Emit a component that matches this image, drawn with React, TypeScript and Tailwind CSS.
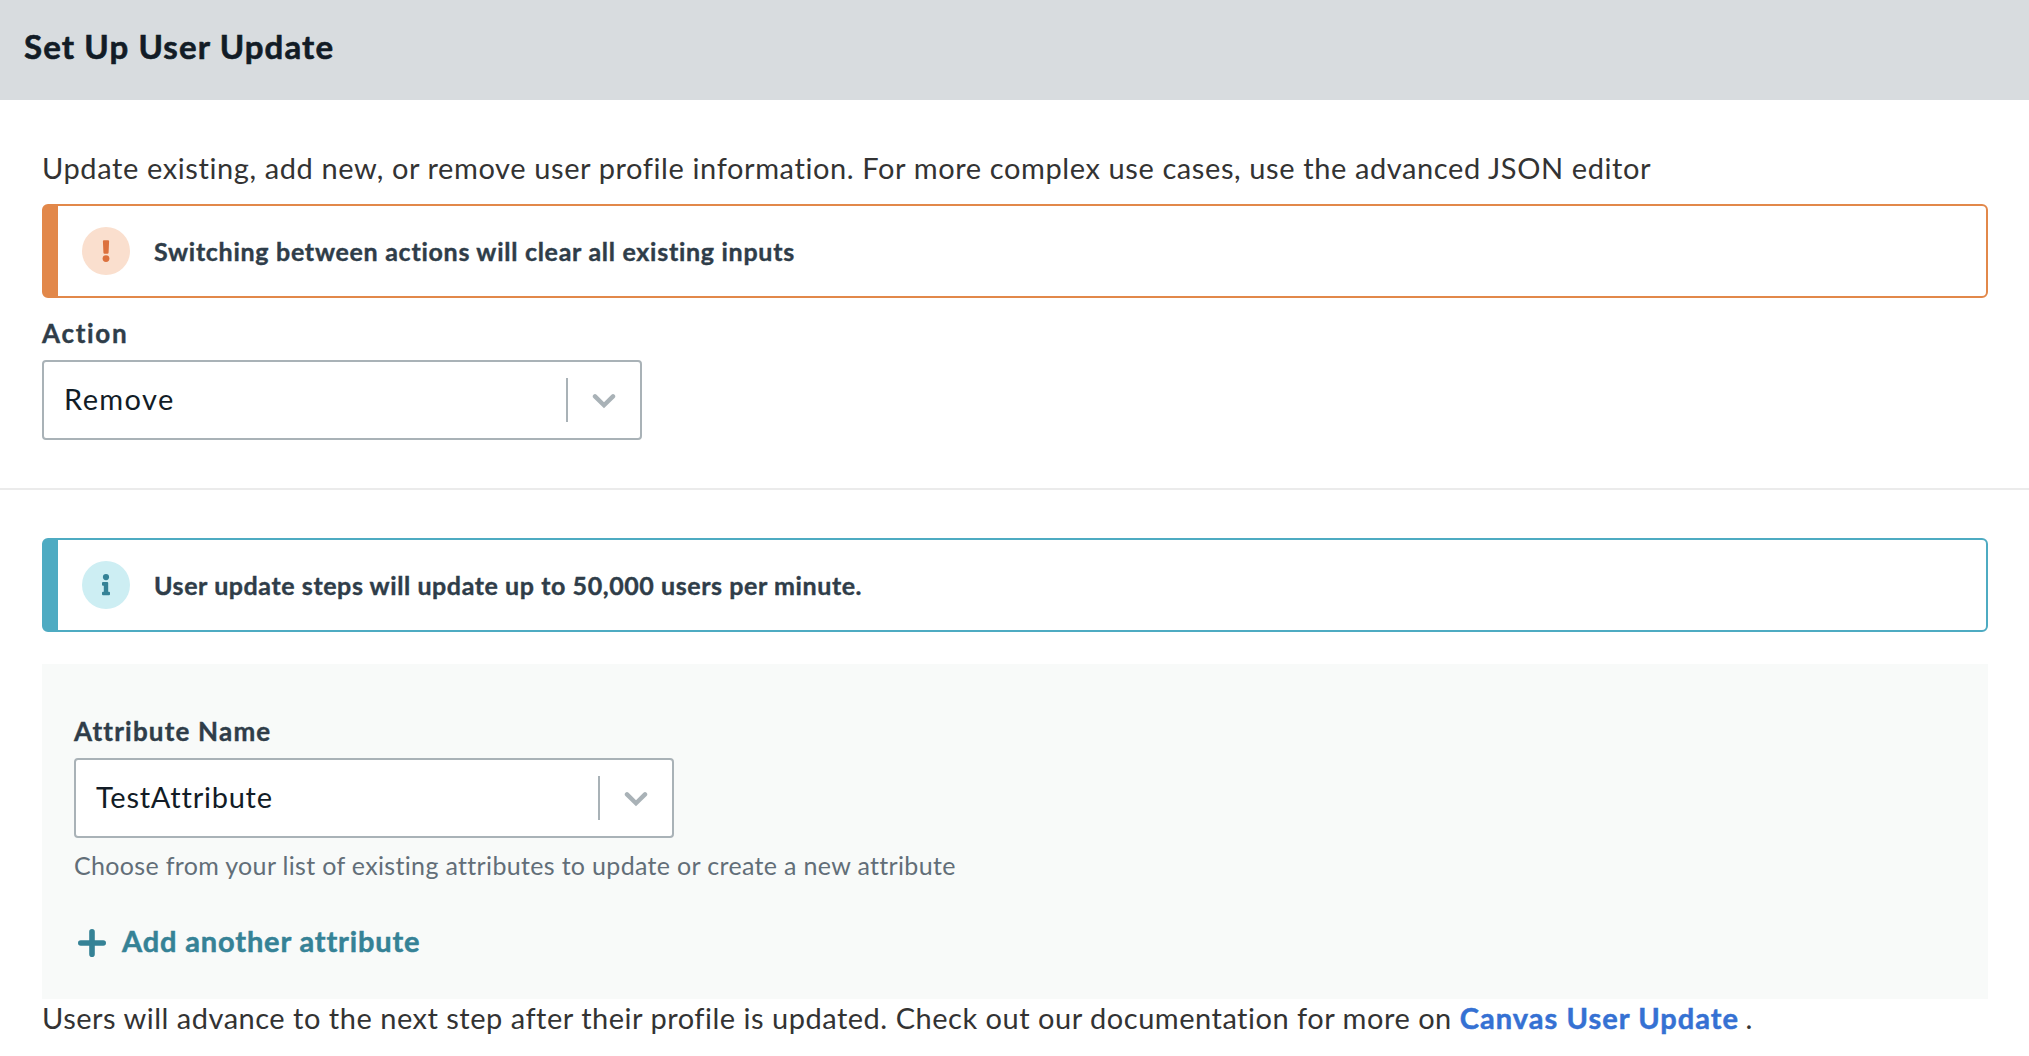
import type { ReactNode } from 'react';

function Alert({ tone, icon, children }: { tone: 'warning' | 'info'; icon: ReactNode; children: ReactNode }) {
  const border = tone === 'warning' ? 'border-[#e2884a]' : 'border-[#4eabc2]';
  const circle = tone === 'warning' ? 'bg-[#fadfce]' : 'bg-[#cdeef3]';
  return (
    <div className={`flex h-[94px] items-center rounded-[6px] border-2 border-l-[16px] bg-white pl-6 ${border}`}>
      <span className={`flex size-12 shrink-0 items-center justify-center rounded-full ${circle}`}>{icon}</span>
      {children}
    </div>
  );
}

function Select({ children }: { children: ReactNode }) {
  return (
    <div className="flex h-20 w-[600px] items-center rounded-[4px] border-2 border-[#a9b2b7] bg-white">
      <div className="flex-1 pb-[2px] pl-5 text-[29px] leading-9 text-[#121c26]">{children}</div>
      <div className="h-11 w-0.5 bg-[#a9b2b7]" />
      <div className="flex w-[72px] items-center justify-center">
        <svg className="mt-0.5" width="24" height="16" viewBox="0 0 24 16" fill="none" stroke="#a9b2b7" strokeWidth="4.4" strokeLinecap="round">
          <path d="M3 3.4 12 12.2 21 3.4" />
        </svg>
      </div>
    </div>
  );
}

export default function App() {
  return (
    <div className="h-[1056px] overflow-hidden bg-white font-['Lato',sans-serif] text-[#333333]">
      <header className="h-[100px] bg-[#d8dcdf] pt-[26px] pl-6">
        <h1 className="text-[33px] leading-10 font-bold tracking-[1.13px] whitespace-nowrap text-[#121c26] [-webkit-text-stroke:0.6px]">Set Up User Update</h1>
      </header>

      <section className="border-b-2 border-[#ebebeb] pt-[46px] pr-[41px] pb-12 pl-[42px]">
        <p className="mb-[14px] text-[29px] leading-[44px] tracking-[0.605px] whitespace-nowrap">
          Update existing, add new, or remove user profile information. For more complex use cases, use the advanced JSON editor
        </p>
        <Alert
          tone="warning"
          icon={
            <svg width="10" height="24" viewBox="0 0 10 24" fill="#dc713e">
              <path d="M3 1.2h4Q8.200 1.200 8.100 2.300L7.600 13.600Q7.500 14.800 6.500 14.800h-3Q2.500 14.800 2.400 13.600L1.900 2.300Q1.800 1.200 3 1.200Z" />
              <circle cx="5" cy="19.600" r="3.400" />
            </svg>
          }
        >
          <span className="ml-6 text-[25px] leading-8 font-bold tracking-[0.72px] text-[#2f3d49] [-webkit-text-stroke:0.4px]">Switching between actions will clear all existing inputs</span>
        </Alert>
        <div className="mt-5 mb-3 text-[26px] leading-[30px] font-bold tracking-[1.7px] text-[#2f3d49] [-webkit-text-stroke:0.4px]">Action</div>
        <Select>
          <span className="tracking-[1.4px]">Remove</span>
        </Select>
      </section>

      <section className="pt-12 pr-[41px] pl-[42px]">
        <Alert
          tone="info"
          icon={
            <svg width="10" height="24" viewBox="0 0 10 24" fill="#358296">
              <circle cx="5" cy="4.100" r="3.100" />
              <path d="M2 9h4.200Q7.200 9 7.200 10v8.800H8q1 0 1 1v1.400q0 1-1 1H2q-1 0-1-1v-1.400q0-1 1-1h.8v-6H2q-1 0-1-1V10q0-1 1-1Z" />
            </svg>
          }
        >
          <span className="ml-6 text-[25px] leading-8 font-bold tracking-[0.58px] text-[#2f3d49] [-webkit-text-stroke:0.4px]">User update steps will update up to 50,000 users per minute.</span>
        </Alert>

        <div className="mt-8 h-[335px] bg-[#f8faf9] pt-[52px] pl-8">
          <div className="mb-3 text-[26px] leading-[30px] font-bold tracking-[1.2px] text-[#2f3d49] [-webkit-text-stroke:0.4px]">Attribute Name</div>
          <Select>
            <span className="tracking-[0.75px]">TestAttribute</span>
          </Select>
          <p className="mt-3 text-[25px] leading-[30px] tracking-[0.33px] text-[#626e78]">
            Choose from your list of existing attributes to update or create a new attribute
          </p>
          <button className="mt-[43px] flex items-center text-[29px] leading-9 font-bold tracking-[0.86px] text-[#358296]">
            <svg className="mt-1 mr-4 ml-1" width="28" height="28" viewBox="0 0 28 28" stroke="currentColor" strokeWidth="5.600" strokeLinecap="round">
              <path d="M14 2.800v22.400M2.800 14h22.400" />
            </svg>
            <span className="[-webkit-text-stroke:0.5px]">Add another attribute</span>
          </button>
        </div>

        <p className="pt-px text-[29px] leading-9 tracking-[0.51px] whitespace-nowrap">
          Users will advance to the next step after their profile is updated. Check out our documentation for more on{' '}
          <a className="font-bold tracking-[1.05px] text-[#3571d3] [-webkit-text-stroke:0.5px]">Canvas User Update</a>
          <span className="tracking-[-1px]"> .</span>
        </p>
      </section>
    </div>
  );
}
